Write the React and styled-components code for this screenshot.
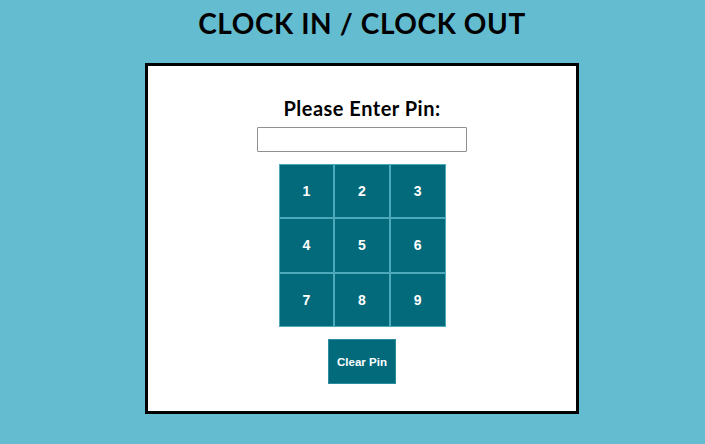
import React from "react";
import styled, { createGlobalStyle } from "styled-components";

const Global = createGlobalStyle`
  html, body { margin: 0; padding: 0; background: #63bcd0; overflow: hidden; }
  body { font-family: Lato, "Noto Sans", sans-serif; }
`;

const Page = styled.div`
  width: 724px;
  height: 444px;
  display: flex;
  flex-direction: column;
  align-items: center;
`;

const Title = styled.h1`
  margin: 6px 0 0;
  font-family: Lato, "Noto Sans", sans-serif;
  font-weight: 700;
  font-size: 28px;
  line-height: 34px;
  color: #000;
  letter-spacing: 0.6px;
`;

const Card = styled.div`
  margin-top: 23px;
  width: 434px;
  height: 351px;
  box-sizing: border-box;
  background: #fff;
  border: 3px solid #000;
  display: flex;
  flex-direction: column;
  align-items: center;
  padding-top: 30px;
`;

const Prompt = styled.h2`
  margin: 0;
  font-family: Lato, "Noto Sans", sans-serif;
  font-weight: 700;
  font-size: 20px;
  line-height: 24px;
  color: #000;
  letter-spacing: 0.5px;
`;

const PinInput = styled.input`
  margin-top: 7px;
  width: 210px;
  height: 25px;
  box-sizing: border-box;
  border: 1px solid #8f8f8f;
  border-radius: 1px;
  background: #fff;
  outline: none;
  padding: 0 4px;
`;

const Pad = styled.div`
  margin-top: 12px;
  width: 167px;
  height: 163px;
  display: grid;
  grid-template-columns: repeat(3, 1fr);
  grid-template-rows: repeat(3, 1fr);
`;

const Key = styled.button`
  box-sizing: border-box;
  margin: 0;
  padding: 0;
  background: #036a7c;
  border: 1px solid #4eaabb;
  color: #fff;
  font-family: "Liberation Sans", Arial, sans-serif;
  font-weight: 700;
  font-size: ${(p) => (p.$small ? "11.5px" : "14px")};
  cursor: pointer;
  width: ${(p) => p.$w || "auto"};
  height: ${(p) => p.$h || "auto"};
`;

const ClearKey = styled(Key)`
  margin-top: 12px;
  border-color: #2d8c9e;
`;

export default function App() {
  const digits = [1, 2, 3, 4, 5, 6, 7, 8, 9];
  return (
    <>
      <Global />
      <Page>
        <Title>CLOCK IN / CLOCK OUT</Title>
        <Card>
          <Prompt>Please Enter Pin:</Prompt>
          <PinInput type="password" />
          <Pad>
            {digits.map((d) => (
              <Key key={d}>{d}</Key>
            ))}
          </Pad>
          <ClearKey $small $w="68px" $h="45px">
            Clear Pin
          </ClearKey>
        </Card>
      </Page>
    </>
  );
}
